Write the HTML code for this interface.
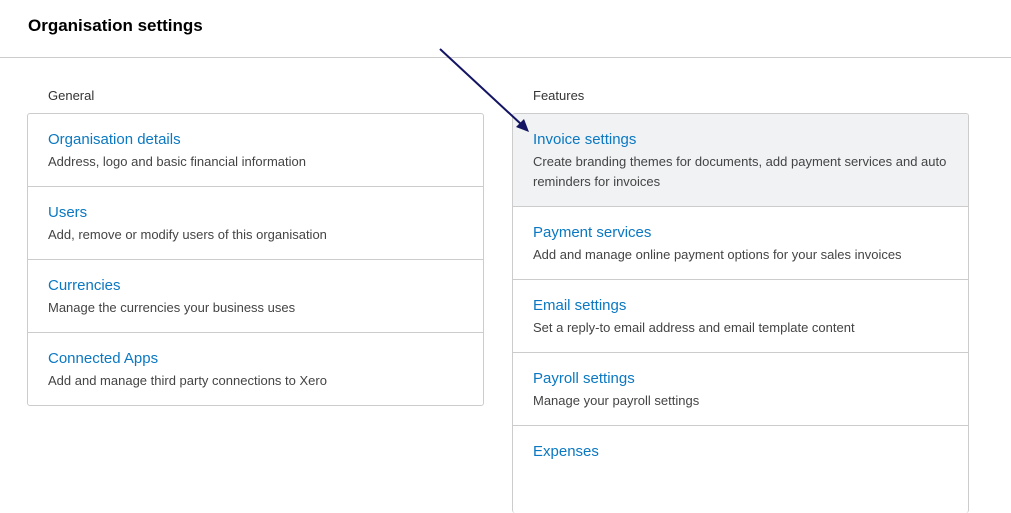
<!DOCTYPE html>
<html><head><style>
*{margin:0;padding:0;box-sizing:border-box}
body{width:1011px;height:457px;overflow:hidden;background:#fff;font-family:"Liberation Sans",Arial,sans-serif;position:relative}
.title{position:absolute;left:28px;top:16px;font-size:17px;font-weight:bold;color:#000}
.hr{position:absolute;left:0;right:0;top:57px;border-top:1px solid #ccc}
.lbl{position:absolute;top:88px;font-size:13px;color:#333}
.card{position:absolute;top:113px;width:457px;border:1px solid #ccc;border-radius:3px;overflow:hidden}
.row{height:73px;border-top:1px solid #ccc;padding:17px 20px 0}
.row:first-child{border-top:none;height:72px}
.row a{display:block;font-size:15px;color:#0a78c2;text-decoration:none;line-height:18px}
.row p{font-size:13px;color:#444;line-height:20px;margin-top:3px}
.hl{background:#f0f2f4;height:92px!important}
</style></head><body>
<div class="title">Organisation settings</div>
<div class="hr"></div>
<div class="lbl" style="left:48px">General</div>
<div class="lbl" style="left:533px">Features</div>
<div class="card" style="left:27px;height:293px">
<div class="row"><a>Organisation details</a><p>Address, logo and basic financial information</p></div>
<div class="row"><a>Users</a><p>Add, remove or modify users of this organisation</p></div>
<div class="row"><a>Currencies</a><p>Manage the currencies your business uses</p></div>
<div class="row"><a>Connected Apps</a><p>Add and manage third party connections to Xero</p></div>
</div>
<div class="card" style="left:512px;height:400px;border-bottom:none">
<div class="row hl"><a>Invoice settings</a><p>Create branding themes for documents, add payment services and auto reminders for invoices</p></div>
<div class="row"><a>Payment services</a><p>Add and manage online payment options for your sales invoices</p></div>
<div class="row"><a>Email settings</a><p>Set a reply-to email address and email template content</p></div>
<div class="row"><a>Payroll settings</a><p>Manage your payroll settings</p></div>
<div class="row"><a>Expenses</a></div>
</div>
<svg style="position:absolute;left:0;top:0" width="1011" height="457">
<line x1="440" y1="49" x2="522" y2="125" stroke="#141464" stroke-width="2"/>
<polygon points="529,132 516,127 524,119" fill="#141464"/>
</svg>
</body></html>
